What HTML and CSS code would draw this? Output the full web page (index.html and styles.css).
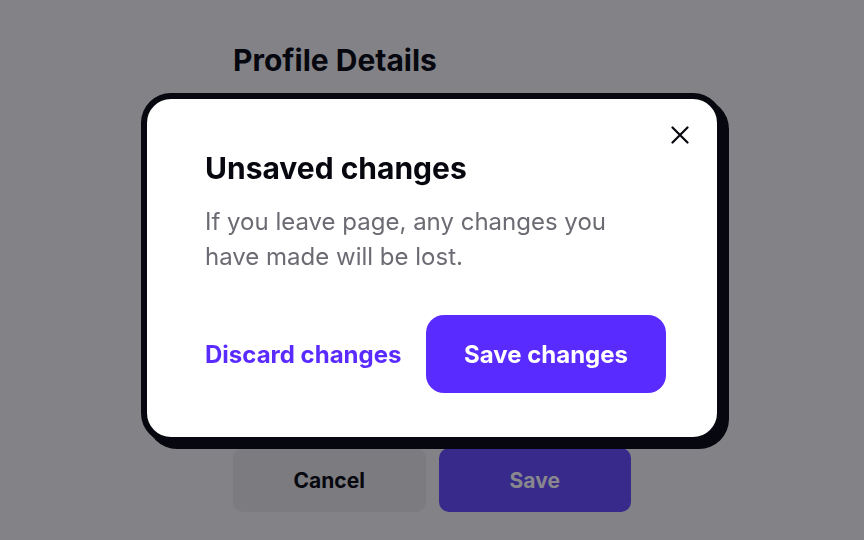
FILE: index.html
```html
<!DOCTYPE html>
<html lang="en">
<head>
<meta charset="utf-8">
<title>Unsaved changes</title>
<link rel="stylesheet" href="styles.css">
</head>
<body>
<main class="page">
  <h1 class="page-title">Profile Details</h1>
  <div class="page-spacer"></div>
  <div class="page-actions">
    <button class="btn-cancel" type="button">Cancel</button>
    <button class="btn-save" type="button">Save</button>
  </div>
</main>
<div class="overlay">
  <div class="modal" role="dialog" aria-labelledby="modal-title">
    <button class="modal-close" type="button" aria-label="Close">
      <svg width="18" height="18" viewBox="0 0 18 18" fill="none" stroke="#07070f" stroke-width="2.2" stroke-linecap="round"><path d="M1.5 1.5 L16.5 16.5 M16.5 1.5 L1.5 16.5"/></svg>
    </button>
    <h2 class="modal-title" id="modal-title">Unsaved changes</h2>
    <p class="modal-text">If you leave page, any changes you have made will be lost.</p>
    <div class="modal-actions">
      <button class="btn-discard" type="button">Discard changes</button>
      <button class="btn-primary" type="button">Save changes</button>
    </div>
  </div>
</div>
</body>
</html>
```
FILE: styles.css
```css
* { box-sizing: border-box; }
html, body { margin: 0; height: 100%; }
body {
  background: #838387;
  font-family: Inter, "Noto Sans", sans-serif;
  overflow: hidden;
}
button { font-family: inherit; border: 0; cursor: pointer; }
.page {
  width: 398px;
  margin: 0 auto;
  padding-top: 40px;
  display: flex;
  flex-direction: column;
}
.page-title {
  margin: 0;
  font-size: 30px;
  line-height: 40px;
  font-weight: 700;
  color: #07070f;
}
.page-spacer { height: 368px; }
.page-actions {
  display: flex;
  gap: 13px;
}
.page-actions button {
  flex: 1;
  height: 64px;
  border-radius: 10px;
  font-size: 21px;
  font-weight: 700;
}
.btn-cancel { background: #7b7b80; color: #07070f; }
.btn-save { background: #372a8a; color: #87878d; }

.overlay {
  position: fixed;
  inset: 0;
  padding-bottom: 4px;
  display: flex;
  align-items: center;
  justify-content: center;
}
.modal {
  position: relative;
  width: 582px;
  height: 350px;
  background: #fff;
  border: 6px solid #07070f;
  border-radius: 30px;
  box-shadow: 6px 6px 0 #07070f;
  padding: 51px 51px 0 58px;
  display: flex;
  flex-direction: column;
}
.modal-close {
  position: absolute;
  top: 22px;
  right: 23px;
  width: 28px;
  height: 28px;
  padding: 0;
  background: transparent;
  display: flex;
  align-items: center;
  justify-content: center;
}
.modal-title {
  margin: 0;
  font-size: 30px;
  line-height: 36px;
  font-weight: 700;
  color: #07070f;
}
.modal-text {
  margin: 18px 0 0;
  width: 440px;
  font-size: 24px;
  line-height: 35px;
  color: #6b6b73;
}
.modal-actions {
  margin-top: 41px;
  display: flex;
  align-items: center;
  justify-content: space-between;
}
.btn-discard {
  background: transparent;
  padding: 0;
  font-size: 24px;
  font-weight: 700;
  color: #5a2bff;
}
.btn-primary {
  width: 240px;
  height: 78px;
  border-radius: 18px;
  background: #5a2bff;
  color: #fff;
  font-size: 24px;
  font-weight: 700;
}
```
